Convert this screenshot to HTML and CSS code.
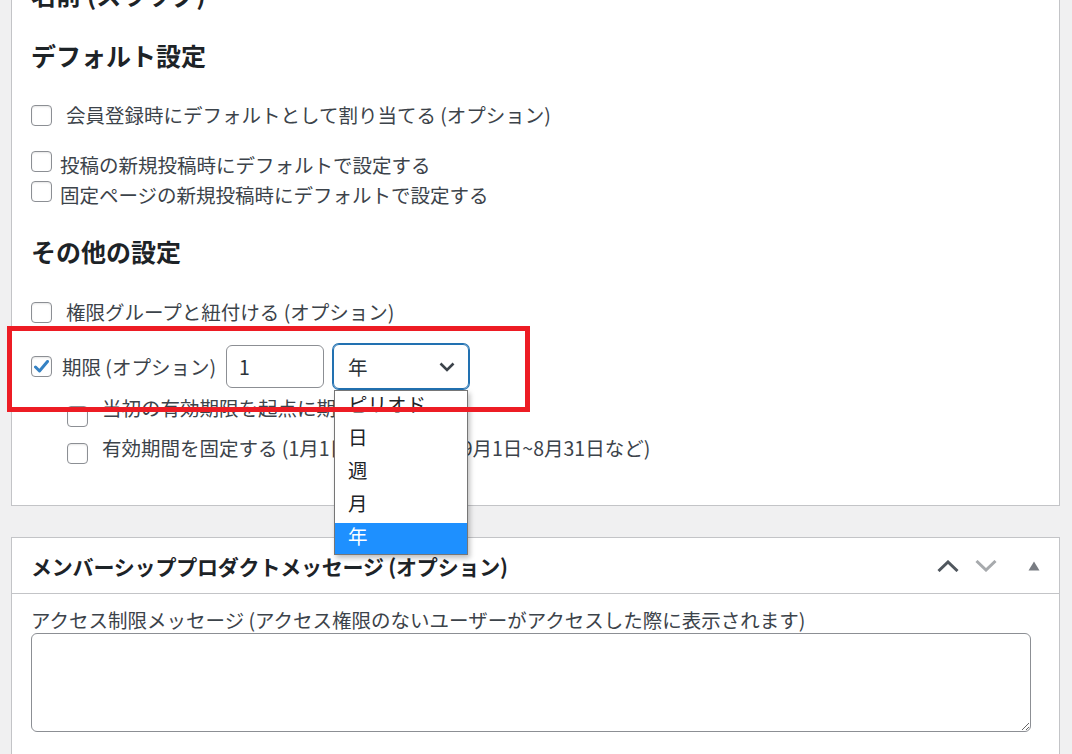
FILE: index.html
```html
<!DOCTYPE html>
<html lang="ja">
<head>
    <meta charset="UTF-8">
    <meta name="viewport" content="width=device-width, initial-scale=1.0">
    <title>メンバーシッププロダクト設定</title>
    <link rel="stylesheet" href="styles.css">
</head>
<body>
    <div class="wrap">
        <div class="postbox settings">
            <h3 class="first">名前 (スラッグ)</h3>

            <h3 class="section section-default">デフォルト設定</h3>
            <div class="row row-wide">
                <span class="cb"></span>
                <span>会員登録時にデフォルトとして割り当てる (オプション)</span>
            </div>
            <div class="row row-tight mt-20">
                <span class="cb cb-up"></span>
                <span>投稿の新規投稿時にデフォルトで設定する</span>
            </div>
            <div class="row row-tight">
                <span class="cb cb-up"></span>
                <span>固定ページの新規投稿時にデフォルトで設定する</span>
            </div>

            <h3 class="section section-other">その他の設定</h3>
            <div class="row row-wide">
                <span class="cb"></span>
                <span>権限グループと紐付ける (オプション)</span>
            </div>

            <div class="row period">
                <span class="cb checked">
                    <svg width="15" height="13" viewBox="0 0 15 13">
                        <path d="M1.5 7 L5.5 11 L13.5 1.5" fill="none" stroke="#3582c4" stroke-width="3" stroke-linecap="round" stroke-linejoin="round"/>
                    </svg>
                </span>
                <span class="period-label">期限 (オプション)</span>
                <div class="text-input">1</div>
                <div class="select-wrap">
                    <div class="select">
                        <span>年</span>
                        <svg width="16" height="10" viewBox="0 0 16 10">
                            <path d="M1.5 1.5 L8 8 L14.5 1.5" fill="none" stroke="#3c434a" stroke-width="2.6"/>
                        </svg>
                    </div>
                    <ul class="dropdown">
                        <li>ピリオド</li>
                        <li>日</li>
                        <li>週</li>
                        <li>月</li>
                        <li class="selected">年</li>
                    </ul>
                </div>
                <div class="highlight"></div>
            </div>

            <div class="row sub sub-a">
                <span class="cb"></span>
                <span>当初の有効期限を起点に期間を更新する</span>
            </div>
            <div class="row sub sub-b">
                <span class="cb"></span>
                <span>有効期間を固定する (1月1日~12月31日、9月1日~8月31日など)</span>
            </div>
        </div>

        <div class="postbox message">
            <div class="postbox-header">
                <h2>メンバーシッププロダクトメッセージ (オプション)</h2>
                <div class="handle-actions">
                    <span class="handle-btn">
                        <svg width="22" height="12" viewBox="0 0 22 12">
                            <path d="M1.5 11 L11 2 L20.5 11" fill="none" stroke="#50575e" stroke-width="3"/>
                        </svg>
                    </span>
                    <span class="handle-btn">
                        <svg width="22" height="12" viewBox="0 0 22 12">
                            <path d="M1.5 1 L11 10 L20.5 1" fill="none" stroke="#a7aaad" stroke-width="3"/>
                        </svg>
                    </span>
                    <span class="handle-btn toggle">
                        <svg width="12" height="10" viewBox="0 0 12 10">
                            <path d="M6 0.5 L11.5 9.5 L0.5 9.5 Z" fill="#787c82"/>
                        </svg>
                    </span>
                </div>
            </div>
            <div class="inside">
                <label for="access">アクセス制限メッセージ (アクセス権限のないユーザーがアクセスした際に表示されます)</label>
                <textarea id="access"></textarea>
            </div>
        </div>
    </div>
</body>
</html>
```

FILE: styles.css
```css
html, body {
    height: 100%;
}
body {
    margin: 0;
    background-color: #f0f0f1;
    font-family: "Noto Sans CJK JP", "Noto Sans", sans-serif;
    font-size: 19.5px;
    line-height: 30px;
    color: #3c434a;
    overflow: hidden;
}
.wrap {
    padding: 0 12px 0 11px;
}
.postbox {
    background-color: #fff;
    border: 1px solid #c3c4c7;
}
.settings {
    margin-top: -40px;
    padding: 18px 19px 42px;
}
h3 {
    margin: 0;
    font-size: 25px;
    line-height: 30px;
    font-weight: 700;
    color: #1d2327;
}
.section-default {
    margin-top: 31px;
}
.section-default + .row {
    margin-top: 30px;
}
.section-other {
    margin-top: 26px;
}
.section-other + .row {
    margin-top: 31px;
}
.row {
    display: flex;
    align-items: center;
    height: 30px;
}
.mt-20 {
    margin-top: 20px;
}
.row-wide .cb {
    margin-right: 14px;
}
.row-tight .cb {
    margin-right: 8px;
}
.cb {
    flex: none;
    width: 21px;
    height: 21px;
    box-sizing: border-box;
    border: 1px solid #8c8f94;
    border-radius: 4px;
    background-color: #fff;
    box-shadow: inset 0 1px 2px rgba(0, 0, 0, 0.1);
    display: flex;
    align-items: center;
    justify-content: center;
}
.cb-up {
    align-self: flex-start;
    margin-top: 1px;
}

/* 期限 row */
.period {
    position: relative;
    height: 45px;
    margin-top: 17px;
}
.period .cb {
    margin-right: 10px;
}
.period-label {
    margin-right: 10px;
}
.text-input {
    width: 98px;
    height: 43px;
    box-sizing: border-box;
    border: 1px solid #8c8f94;
    border-radius: 6px;
    padding: 0 12px;
    line-height: 41px;
    color: #2c3338;
    margin-right: 9px;
}
.select-wrap {
    position: relative;
}
.select {
    width: 136px;
    height: 45px;
    box-sizing: border-box;
    border: 1px solid #2271b1;
    box-shadow: 0 0 0 1px #2271b1;
    border-radius: 6px;
    padding: 0 13px 0 14px;
    display: flex;
    align-items: center;
    justify-content: space-between;
    color: #2c3338;
}
.dropdown {
    position: absolute;
    top: 46px;
    left: 1px;
    z-index: 2;
    width: 134px;
    height: 165px;
    box-sizing: border-box;
    margin: 0;
    padding: 0;
    list-style: none;
    overflow: hidden;
    background-color: #fff;
    border: 1px solid #767676;
    box-shadow: 2px 3px 5px rgba(0, 0, 0, 0.25);
}
.dropdown li {
    height: 33px;
    line-height: 26px;
    padding-left: 13px;
    color: #1d2327;
}
.dropdown li.selected {
    background-color: #1e90ff;
    color: #fff;
}
.highlight {
    position: absolute;
    left: -24px;
    top: -18px;
    width: 523px;
    height: 86px;
    box-sizing: border-box;
    border: 5px solid #ed1c24;
    z-index: 3;
    pointer-events: none;
}

/* indented options */
.sub {
    align-items: flex-start;
    padding-left: 36px;
}
.sub .cb {
    margin-right: 14px;
}
.sub-a {
    margin-top: 4px;
}
.sub-a .cb {
    margin-top: 13px;
}
.sub-b {
    margin-top: 10px;
}
.sub-b .cb {
    margin-top: 10px;
}

/* message box */
.message {
    margin-top: 31px;
}
.postbox-header {
    height: 55px;
    border-bottom: 1px solid #c3c4c7;
    display: flex;
    align-items: center;
    justify-content: space-between;
    padding: 0 6px 0 19px;
}
.postbox-header h2 {
    margin: 0;
    font-size: 21px;
    font-weight: 700;
    color: #1d2327;
    letter-spacing: -0.2px;
}
.handle-actions {
    display: flex;
    align-items: center;
}
.handle-btn {
    width: 38px;
    height: 38px;
    display: flex;
    align-items: center;
    justify-content: center;
}
.handle-btn.toggle {
    margin-left: 10px;
}
.inside {
    padding: 12px 28px 30px 19px;
}
label {
    display: block;
    line-height: 27px;
}
textarea {
    display: block;
    width: 100%;
    height: 99px;
    box-sizing: border-box;
    border: 1px solid #8c8f94;
    border-radius: 6px;
    font-family: inherit;
    font-size: 19.5px;
}
```
